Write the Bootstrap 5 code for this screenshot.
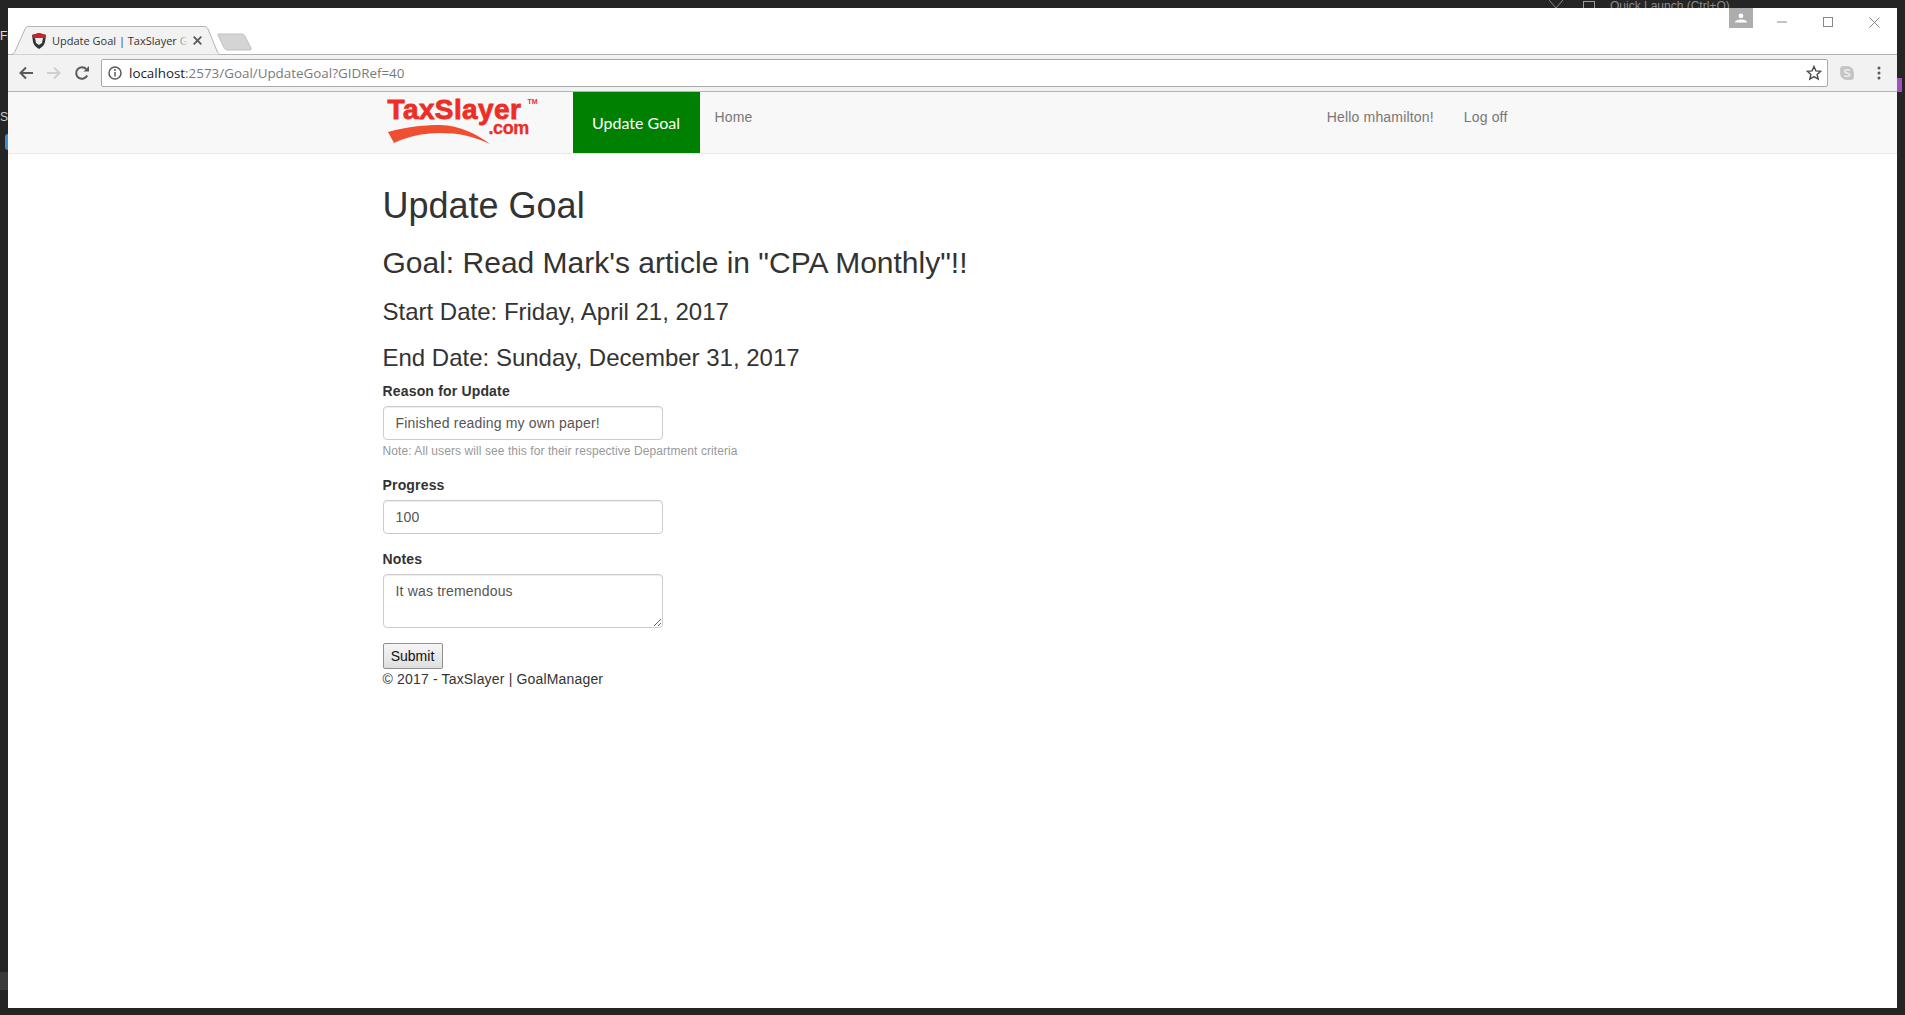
<!DOCTYPE html>
<html lang="en">
<head>
  <meta charset="UTF-8" />
  <title>Update Goal | TaxSlayer GoalManager</title>
  <link href="https://cdn.jsdelivr.net/npm/bootstrap@5.3.2/dist/css/bootstrap.min.css" rel="stylesheet" />
  <style>
    html, body { height: 100%; }
    body {
      background: #252526;
      padding: 8px;
      font-family: "Liberation Sans", Arial, sans-serif;
      font-size: 14px;
      line-height: 20px;
      color: #333;
      overflow: hidden;
      position: relative;
    }
    .win { height: 1000px; background: #fff; display: flex; flex-direction: column; position: relative; }

    /* bits of the editor behind the browser window */
    .behind { position: absolute; overflow: hidden; color: #8c8c8c; font-size: 12px; line-height: 14px; white-space: nowrap; }
    .behind-quick { left: 1610px; top: 0; width: 130px; height: 8px; }
    .behind-quick span { position: relative; top: -1px; }
    .behind-filter { left: 1549px; top: 0; width: 14px; height: 8px; }
    .behind-box { left: 1583px; top: 1px; width: 12px; height: 7px; border: 1px solid #9a9a9a; border-bottom: 0; }
    .behind-f { left: 0; top: 29px; width: 8px; height: 16px; color: #ddd; }
    .behind-s { left: 0; top: 110px; width: 8px; height: 16px; color: #ccc; }
    .behind-dot { left: 5px; top: 134px; width: 3px; height: 16px; background: #3f8fd0; border-radius: 3px 0 0 3px; }
    .behind-purple { left: 1897px; top: 78px; width: 5px; height: 14px; background: #a24fc0; }
    .behind-arrow { left: 0; top: 972px; width: 8px; height: 18px; background: #3a3a3c; }

    /* browser chrome */
    .tabstrip { height: 47px; flex: none; display: flex; align-items: flex-end; border-bottom: 1px solid #b3b3b3; position: relative; }
    .tabshape { width: 212px; height: 29px; position: relative; margin-bottom: -1px; }
    .tabbg { position: absolute; left: 0; top: 0; }
    .tabtext { position: absolute; left: 44px; top: 6px; width: 138px; overflow: hidden; white-space: nowrap; font-family: "Open Sans", sans-serif; font-size: 11px; line-height: 17px; color: #333; }
    .tabfade { position: absolute; left: 167px; top: 6px; width: 15px; height: 17px; background: linear-gradient(to right, rgba(242,242,242,0), #f2f2f2 85%); }
    .tabclose { position: absolute; left: 185px; top: 10px; }
    .favicon { position: absolute; left: 23px; top: 7px; }
    .newtab { margin-left: -3px; margin-bottom: 3px; }
    .profile { position: absolute; right: 144px; top: 0; width: 24px; height: 20px; background: #adadad; display: flex; align-items: center; justify-content: center; }
    .winbtns { position: absolute; right: 0; top: 2px; display: flex; }
    .winbtns div { width: 46px; height: 24px; display: flex; align-items: center; justify-content: center; }

    .toolbar { height: 37px; flex: none; background: #f2f2f2; border-bottom: 1px solid #b3b3b3; display: flex; align-items: center; padding-left: 4px; }
    .tbicon { width: 28px; height: 24px; display: flex; align-items: center; justify-content: center; flex: none; }
    .omni { width: 1727px; height: 28px; margin-left: 5px; background: #fff; border: 1px solid #a9a9a9; border-radius: 2px; display: flex; align-items: center; flex: none; font-family: "Open Sans", sans-serif; font-size: 13.4px; color: #7a7a7a; }
    .omni b { font-weight: 400; color: #222; }
    .omni .urltxt { margin-left: 7px; flex: 1; }
    .omni svg { flex: none; }
    .omni-info { margin-left: 6px; }
    .omni-star { margin-right: 5px; }
    .skypebtn { margin-left: 5px; }
    .dotsbtn { margin-left: 4px; }

    /* site navbar */
    .sitenav { height: 62px; flex: none; background: #f8f8f8; border-bottom: 1px solid #e7e7e7; }
    .wrap1170 { width: 1170px; margin: 0 auto; padding: 0 15px; letter-spacing: .17px; }
    .sitenav .wrap1170 { display: flex; height: 61px; }
    .brandbox { width: 190px; flex: none; position: relative; height: 61px; letter-spacing: 0; }
    .brandtxt { position: absolute; left: 5px; top: 6px; font-weight: 700; font-size: 28px; letter-spacing: .4px; color: #ee2d24; line-height: 24px; -webkit-text-stroke: .8px #ee2d24; }
    .brandcom { position: absolute; left: 106px; top: 30px; font-weight: 700; font-size: 18px; color: #ee2d24; line-height: 12px; letter-spacing: -.4px; -webkit-text-stroke: .3px #ee2d24; }
    .brandtm { position: absolute; left: 145px; top: 6px; font-weight: 700; font-size: 7px; color: #ee2d24; line-height: 8px; }
    .swoosh { position: absolute; left: 5px; top: 33px; }
    .activegoal { width: 127px; flex: none; background: #008000; color: #fff; font-family: Lato, sans-serif; font-size: 16px; letter-spacing: 0; display: flex; align-items: center; justify-content: center; }
    .sitelink { color: #777; text-decoration: none; padding: 15px; line-height: 20px; }
    .spacer { flex: 1; }

    /* page */
    .pagebody { padding-top: 12px; }
    .pagebody h1, .pagebody h2, .pagebody h3 { font-family: "Liberation Sans", Arial, sans-serif; font-weight: 500; line-height: 1.1; color: #333; margin: 20px 0 10px; letter-spacing: 0; }
    .pagebody h1 { font-size: 36px; }
    .pagebody h2 { font-size: 30px; }
    .pagebody h3 { font-size: 24px; }
    .goalform label { display: block; font-weight: 700; margin-bottom: 5px; line-height: 20px; }
    .fgroup { margin-bottom: 15px; }
    .finput { display: block; width: 280px; height: 34px; padding: 6px 12px; font-size: 14px; line-height: 20px; letter-spacing: .17px; color: #555; background: #fff; border: 1px solid #ccc; border-radius: 4px; box-shadow: inset 0 1px 1px rgba(0,0,0,.075); font-family: inherit; outline: 0; }
    textarea.finput { height: 54px; }
    .hint { display: block; font-size: 12px; line-height: 16px; letter-spacing: .08px; color: #999; margin-top: 3px; padding-bottom: 1px; }
    .submitbtn { display: block; width: 60px; height: 26px; padding: 0; font-size: 14px; font-family: inherit; color: #111; background: linear-gradient(#f6f6f6, #dedede); border: 1px solid #8f8f8f; border-radius: 2px; line-height: 22px; }
  </style>
</head>
<body>
  <svg class="behind behind-filter" width="14" height="8" viewBox="0 0 14 8"><path d="M0 0l7 8 7-8" fill="none" stroke="#8c8c8c"/></svg>
  <div class="behind behind-box"></div>
  <div class="behind behind-quick"><span>Quick Launch (Ctrl+Q)</span></div>
  <div class="behind behind-f">Fi</div>
  <div class="behind behind-s">S</div>
  <div class="behind behind-dot"></div>
  <div class="behind behind-purple"></div>
  <div class="behind behind-arrow"></div>

  <div class="win">
    <!-- tabs -->
    <div class="tabstrip">
      <div class="tabshape">
        <svg class="tabbg" width="212" height="30" viewBox="0 0 212 30"><path d="M0 28.500h2c3 0 4-1 5-3L17 3c1-2 2-2.500 4-2.500h175c2 0 3 .5 4 2.500l9 22c1 2 2 3.500 3 3.500" fill="#f2f2f2" stroke="#b3b3b3"/></svg>
        <svg class="favicon" width="16" height="16" viewBox="0 0 16 16"><path d="M1 2l7-2 7 2-1 7c-.5 3-3 5-6 7-3-2-5.500-4-6-7z" fill="#333"/><path d="M1 2l7-2 7 2-1 3H2z" fill="#c8232a"/><path d="M4 5h8l-1 5-3 2-3-2z" fill="#eee"/></svg>
        <div class="tabtext">Update Goal | TaxSlayer GoalManager</div>
        <div class="tabfade"></div>
        <svg class="tabclose" width="9" height="9" viewBox="0 0 9 9"><path d="M.7.700l7.600 7.600M8.300.700L.7 8.300" stroke="#5a5a5a" stroke-width="1.800"/></svg>
      </div>
      <svg class="newtab" width="36" height="18" viewBox="0 0 36 18"><path d="M1 1h24c1 0 2 .5 2.500 1.500L34 15c.5 1 0 2-1 2H10c-1 0-2-.5-2.500-1.500L1 2c-.3-.5 0-1 0-1z" fill="#d4d4d4" stroke="#c0c0c0"/></svg>
      <div class="profile"><svg width="12" height="10" viewBox="0 0 12 10"><circle cx="6" cy="2.800" r="2.400" fill="#fff"/><path d="M0 9.500c0-2 3-3 6-3s6 1 6 3z" fill="#fff"/></svg></div>
      <div class="winbtns">
        <div><svg width="10" height="2"><path d="M0 1h10" stroke="#888" stroke-width="1"/></svg></div>
        <div><svg width="10" height="10"><rect x=".5" y=".5" width="9" height="9" fill="none" stroke="#888"/></svg></div>
        <div><svg width="11" height="11"><path d="M.5.500l10 10M10.500.500l-10 10" stroke="#888"/></svg></div>
      </div>
    </div>

    <!-- address bar -->
    <div class="toolbar">
      <div class="tbicon"><svg width="16" height="16" viewBox="0 0 16 16"><path d="M15 8H3M8 2.500L2.500 8 8 13.500" fill="none" stroke="#5a5a5a" stroke-width="2"/></svg></div>
      <div class="tbicon"><svg width="16" height="16" viewBox="0 0 16 16"><path d="M1 8h12M8 2.500L13.500 8 8 13.500" fill="none" stroke="#cfcfcf" stroke-width="2"/></svg></div>
      <div class="tbicon"><svg width="16" height="16" viewBox="0 0 16 16"><path d="M13.200 10.500A5.800 5.800 0 1 1 12.200 4" fill="none" stroke="#5a5a5a" stroke-width="2"/><path d="M9.500 6.500H15V1z" fill="#5a5a5a"/></svg></div>
      <div class="omni">
        <svg class="omni-info" width="14" height="14" viewBox="0 0 14 14"><circle cx="7" cy="7" r="6" fill="none" stroke="#5a5a5a" stroke-width="1.500"/><path d="M7 6v4.500" stroke="#5a5a5a" stroke-width="1.500"/><circle cx="7" cy="4" r="1" fill="#5a5a5a"/></svg>
        <div class="urltxt"><b>localhost</b>:2573/Goal/UpdateGoal?GIDRef=40</div>
        <svg class="omni-star" width="16" height="16" viewBox="0 0 16 16"><path d="M8 1.500l1.900 4.400 4.800.4-3.600 3.100 1.100 4.700L8 11.600l-4.200 2.500 1.100-4.700-3.600-3.100 4.800-.4z" fill="none" stroke="#4a4a4a" stroke-width="1.400"/></svg>
      </div>
      <div class="tbicon skypebtn"><svg width="16" height="16" viewBox="0 0 16 16"><circle cx="8" cy="8" r="7" fill="#c4c4c4"/><circle cx="4.500" cy="4.500" r="3.500" fill="#c4c4c4"/><circle cx="11.500" cy="11.500" r="3.500" fill="#c4c4c4"/><path d="M11 5.600C10 4.500 5.500 4.300 5.500 6.300c0 2.200 5.200 1.300 5.200 3.500 0 1.900-4.200 1.800-5.500.6" fill="none" stroke="#eee" stroke-width="1.400"/></svg></div>
      <div class="tbicon dotsbtn"><svg width="4" height="14" viewBox="0 0 4 14"><circle cx="2" cy="2" r="1.500" fill="#5a5a5a"/><circle cx="2" cy="7" r="1.500" fill="#5a5a5a"/><circle cx="2" cy="12" r="1.500" fill="#5a5a5a"/></svg></div>
    </div>

    <!-- site nav -->
    <nav class="sitenav">
      <div class="wrap1170">
        <div class="brandbox">
          <span class="brandtxt">TaxSlayer</span>
          <span class="brandtm">TM</span>
          <span class="brandcom">.com</span>
          <svg class="swoosh" width="103" height="20" viewBox="0 0 103 20"><path d="M0 7C20 1 40 0 52 0 72 0 90 10 102 19 85 11 70 8 52 8 35 8 18 12 6 18z" fill="#f04e30"/></svg>
        </div>
        <div class="activegoal">Update Goal</div>
        <a class="sitelink" href="#">Home</a>
        <div class="spacer"></div>
        <a class="sitelink" href="#">Hello mhamilton!</a>
        <a class="sitelink" href="#">Log off</a>
      </div>
    </nav>

    <!-- page -->
    <div class="wrap1170 pagebody">
      <h1>Update Goal</h1>
      <h2>Goal: Read Mark's article in "CPA Monthly"!!</h2>
      <h3>Start Date: Friday, April 21, 2017</h3>
      <h3>End Date: Sunday, December 31, 2017</h3>
      <form class="goalform">
        <div class="fgroup">
          <label for="reason">Reason for Update</label>
          <input id="reason" class="finput" type="text" value="Finished reading my own paper!" />
          <span class="hint">Note: All users will see this for their respective Department criteria</span>
        </div>
        <div class="fgroup">
          <label for="progress">Progress</label>
          <input id="progress" class="finput" type="text" value="100" />
        </div>
        <div class="fgroup">
          <label for="notes">Notes</label>
          <textarea id="notes" class="finput">It was tremendous</textarea>
        </div>
        <button type="button" class="submitbtn">Submit</button>
      </form>
      <footer>© 2017 - TaxSlayer | GoalManager</footer>
    </div>
  </div>
  <script src="https://cdn.jsdelivr.net/npm/bootstrap@5.3.2/dist/js/bootstrap.bundle.min.js"></script>
</body>
</html>
